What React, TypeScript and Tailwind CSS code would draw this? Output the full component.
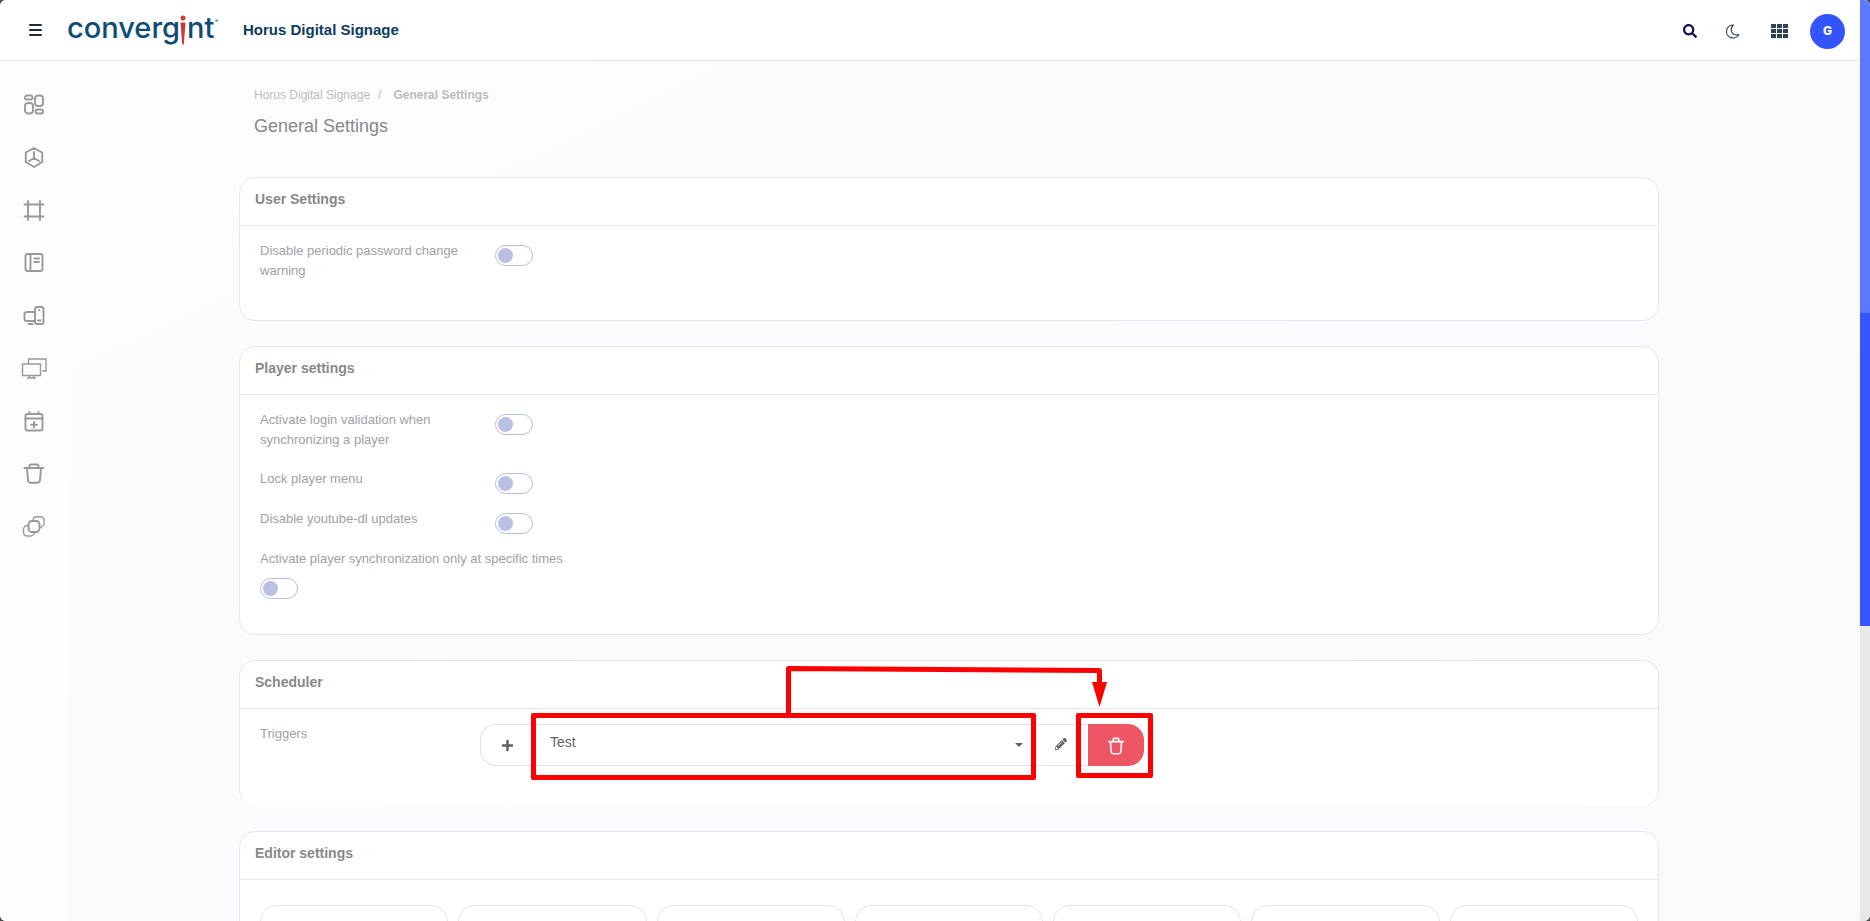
import { ReactNode } from 'react';
import { FaPencilAlt, FaPlus, FaSearch } from 'react-icons/fa';

const TrashIcon = ({ className }: { className?: string }) => (
  <svg viewBox="0 0 20 22" fill="none" stroke="currentColor" strokeWidth="2" strokeLinecap="round" strokeLinejoin="round" className={className}>
    <path d="M1 5.5h18M6.500 5.500V3a1.500 1.500 0 0 1 1.500-1.500h4A1.500 1.500 0 0 1 13.500 3v2.500M3 5.500l1 13a2.500 2.500 0 0 0 2.500 2.200h7a2.500 2.500 0 0 0 2.500-2.200l1-13" />
  </svg>
);

const MoonIcon = () => (
  <svg width="15" height="15" viewBox="0 0 15 15" fill="none" stroke="currentColor" strokeWidth="1.200" strokeLinejoin="round">
    <path d="M8.500 1A6.500 6.500 0 1 0 13.800 10.500C10 11.800 6.500 9.800 6.200 6.300 6 4 7 2.200 8.500 1z" />
  </svg>
);

const navItems: { label: string; icon: ReactNode }[] = [
  {
    label: 'Dashboard',
    icon: (
      <>
        <rect x="4" y="1.500" width="7.500" height="4" rx="2" />
        <rect x="14" y="1.500" width="8" height="10.500" rx="3" />
        <rect x="4" y="9" width="8" height="10.500" rx="3" />
        <rect x="14.500" y="15.500" width="7.500" height="4" rx="2" />
      </>
    ),
  },
  {
    label: 'Media',
    icon: <path d="M13 1l8.200 4.500v9.500L13 20l-8.200-5V5.500zM13 5v6M13 11l-5 3M13 11l5 3" />,
  },
  {
    label: 'Layouts',
    icon: <path d="M7 1v19M19 1v19M3.500 4.500h19M3.500 16.500h19" />,
  },
  {
    label: 'Playlists',
    icon: (
      <>
        <rect x="4.500" y="2" width="17" height="17" rx="2" />
        <path d="M9.500 2v17M13.500 6.500h4.500M13.500 10h4.500" />
      </>
    ),
  },
  {
    label: 'Players',
    icon: (
      <>
        <path d="M14 16H5.500a2 2 0 0 1-2-2V9a2 2 0 0 1 2-2H14M7.500 19h4" />
        <rect x="14" y="2" width="8.500" height="17" rx="2" />
        <path d="M18 5h.500M17 15.500h2.500" />
      </>
    ),
  },
  {
    label: 'Screens',
    icon: <path strokeWidth="1.400" d="M1.500 6h18v11.500h-18zM7.500 5V1h17.500v12h-3.500M8.500 17.500v2.500M12.500 17.500v2.500M6.500 20h8" />,
  },
  {
    label: 'Calendar',
    icon: (
      <>
        <rect x="4.500" y="3" width="17" height="16.500" rx="2" />
        <path d="M4.500 7.500h17M8.500 1v2M17.500 1v2M13 11v5.500M10.200 13.700h5.600" />
      </>
    ),
  },
  {
    label: 'Trash',
    icon: <path d="M3.500 5h19M8.500 5V3a1.500 1.500 0 0 1 1.500-1.500h6A1.500 1.500 0 0 1 17.500 3v2M6 5l1 12.500a2.500 2.500 0 0 0 2.500 2.200h7a2.500 2.500 0 0 0 2.500-2.200L20 5" />,
  },
  {
    label: 'Groups',
    icon: (
      <>
        <rect x="7.500" y="5" width="11" height="11" rx="3.500" />
        <path strokeWidth="1.400" d="M12 4.500a4 4 0 0 1 4-3.700h3.500a3.500 3.500 0 0 1 3.500 3.500v3a4 4 0 0 1-4 4M7 9.500a4 4 0 0 0-4.500 4V16.500a3.500 3.500 0 0 0 3.500 3.500h3.500a4 4 0 0 0 4-3.500" />
      </>
    ),
  },
];

const Logo = () => (
  <svg width="152" height="50" viewBox="0 0 152 50" role="img" aria-label="convergint">
    <g fill="#0f4c75" fontFamily="Inter, sans-serif" fontSize="29" fontWeight="500">
      <text x="-1" y="33">converg</text>
      <text x="119" y="33">nt</text>
      <text x="147" y="18" fontSize="5">®</text>
    </g>
    <circle cx="115" cy="13" r="2.500" fill="#cf3a35" />
    <path d="M112.500 17.500h5L115.800 39.500h-1.600z" fill="#cf3a35" />
  </svg>
);

const Header = () => (
  <header className="flex h-[61px] shrink-0 items-center border-b border-[#e6e6ec] bg-white pl-[29px] pr-[15px]">
    <button aria-label="Toggle menu" className="flex w-[13px] flex-col gap-[3px]">
      <span className="h-[2px] rounded bg-[#1d2b36]" />
      <span className="h-[2px] rounded bg-[#1d2b36]" />
      <span className="h-[2px] rounded bg-[#1d2b36]" />
    </button>
    <a href="#" className="ml-[26px]">
      <Logo />
    </a>
    <span className="ml-[23px] text-[15px] font-bold text-[#0c3c60]">Horus Digital Signage</span>
    <div className="ml-auto flex items-center pt-0.5">
      <button aria-label="Search" className="text-[#10134f]">
        <FaSearch size={14} />
      </button>
      <button aria-label="Dark mode" className="ml-7 text-[#34495e]">
        <MoonIcon />
      </button>
      <button aria-label="Applications" className="ml-[31px] grid grid-cols-3 gap-px">
        {Array.from({ length: 9 }, (_, i) => (
          <span key={i} className="h-1 w-[5px] bg-[#2c4257]" />
        ))}
      </button>
      <button className="ml-[22px] size-[35px] rounded-full bg-[#3354ff] font-[Inter] text-xs font-extrabold text-white">G</button>
    </div>
  </header>
);

const Sidebar = () => (
  <nav className="w-[68px] shrink-0 bg-[#fdfdff] pt-[33px]">
    <div className="flex h-[443px] flex-col items-center justify-between">
      {navItems.map(({ label, icon }) => (
        <a key={label} href="#" aria-label={label} className="text-[#999]">
          <svg width="26" height="21" viewBox="0 0 26 21" fill="none" stroke="currentColor" strokeWidth="1.900" strokeLinecap="round" strokeLinejoin="round" className="overflow-visible">
            {icon}
          </svg>
        </a>
      ))}
    </div>
  </nav>
);

const Card = ({ title, className = '', children }: { title: string; className?: string; children: ReactNode }) => (
  <section className={`rounded-2xl border border-[#e6e6ec] bg-white ${className}`}>
    <h2 className="h-[47px] px-[15px] pt-[11px] text-sm font-bold text-[#888]">{title}</h2>
    <div className="border-t border-[#e6e6ec] px-5 pt-[15px]">{children}</div>
  </section>
);

const Toggle = ({ id }: { id: string }) => (
  <input
    id={id}
    type="checkbox"
    role="switch"
    className="mt-1 block h-[21px] w-[38px] shrink-0 cursor-pointer appearance-none rounded-full border border-[#b4bbe4] bg-white p-0.5 before:block before:size-[15px] before:rounded-full before:bg-[#b9c0e4] checked:before:ml-auto"
  />
);

const ToggleRow = ({ id, label }: { id: string; label: string }) => (
  <div className="mb-[15px] flex items-start">
    <label htmlFor={id} className="mr-5 w-[215px] pb-1">
      {label}
    </label>
    <Toggle id={id} />
  </div>
);

const TriggerPicker = () => (
  <div className="relative flex h-[42px] w-[664px] text-[#5f6368]">
    <button aria-label="Add trigger" className="flex w-[54px] items-center justify-center rounded-l-2xl border border-r-0 border-[#e2e2e6]">
      <FaPlus size={13} />
    </button>
    <div className="relative flex flex-1 border-y border-[#e2e2e6]">
      <select id="triggers" className="w-full appearance-none bg-transparent pb-1.5 pl-4 text-sm outline-none">
        <option>Test</option>
      </select>
      <span className="pointer-events-none absolute right-2 top-[18px] border-x-4 border-t-4 border-x-transparent border-t-[#5f6368]" />
    </div>
    <button aria-label="Edit trigger" className="flex w-[57px] items-center justify-center border-y border-[#e2e2e6] pb-0.5 pl-0.5">
      <FaPencilAlt size={12} />
    </button>
    <button aria-label="Delete trigger" className="flex w-14 items-center justify-center rounded-r-2xl bg-[#ee5565] pt-0.5 text-white">
      <TrashIcon className="h-[18px] w-4" />
    </button>

    {/* Highlight boxes and the arrow between them */}
    <div className="pointer-events-none absolute -top-[11px] left-[51px] h-[67px] w-[505px] rounded-xs border-5 border-[#f00]" />
    <div className="pointer-events-none absolute -right-[9px] -top-[11px] h-[65px] w-[77px] rounded-xs border-5 border-[#f00]" />
    <svg width="330" height="50" viewBox="0 0 330 50" className="pointer-events-none absolute -top-[60px] left-[304px]">
      <path d="M4.500 50V4.500L315.500 6.500V20" fill="none" stroke="#f00" strokeWidth="5" strokeLinejoin="round" />
      <path d="M308 18h15l-7.500 25z" fill="#f00" />
    </svg>
  </div>
);

export default function App() {
  return (
    <div className="flex h-screen bg-[#4a4a52] font-['Liberation_Sans',Arial,sans-serif]">
      <div className="flex h-full w-full overflow-hidden rounded-md bg-[#fafaff]">
        <div className="flex min-w-0 flex-1 flex-col">
          <Header />
          <div className="flex min-h-0 flex-1">
            <Sidebar />
            <main className="flex-1 overflow-hidden bg-linear-to-br from-[#fdfdff] via-[#fbfbff] to-[#f9f9fe] pl-[171px] pr-[201px] text-[13px] leading-5 text-[#a0a0a8]">
              <div className="h-[116px] px-[15px] pt-[26px]">
                <nav aria-label="Breadcrumb" className="flex text-xs text-[#bbb]">
                  <a href="#">Horus Digital Signage</a>
                  <span className="mx-2">/</span>
                  <span className="ml-1 font-bold">General Settings</span>
                </nav>
                <h1 className="mt-[11px] text-lg leading-6 text-[#888]">General Settings</h1>
              </div>

              <div className="flex flex-col gap-[25px]">
                <Card title="User Settings" className="h-36">
                  <ToggleRow id="password-warning" label="Disable periodic password change warning" />
                </Card>

                <Card title="Player settings" className="pb-[35px]">
                  <ToggleRow id="login-validation" label="Activate login validation when synchronizing a player" />
                  <ToggleRow id="lock-menu" label="Lock player menu" />
                  <ToggleRow id="youtube-dl" label="Disable youtube-dl updates" />
                  <label htmlFor="sync-times" className="mb-[9px] block">
                    Activate player synchronization only at specific times
                  </label>
                  <Toggle id="sync-times" />
                </Card>

                <Card title="Scheduler" className="border-b-0 pb-10">
                  <div className="flex items-start">
                    <label htmlFor="triggers" className="w-[220px]">
                      Triggers
                    </label>
                    <TriggerPicker />
                  </div>
                </Card>

                <Card title="Editor settings">
                  <div className="grid grid-cols-7 gap-2.5 pb-5 pt-2.5">
                    {Array.from({ length: 7 }, (_, i) => (
                      <div key={i} className="h-32 rounded-2xl border border-[#e2e2e2]" />
                    ))}
                  </div>
                </Card>
              </div>
            </main>
          </div>
        </div>

        {/* Page scroll indicator */}
        <div className="flex w-2.5 shrink-0 flex-col bg-[#e8e8e8]">
          <div className="h-[34%] bg-[#5c78ff]" />
          <div className="h-[34%] bg-[#3354ff]" />
        </div>
      </div>
    </div>
  );
}
